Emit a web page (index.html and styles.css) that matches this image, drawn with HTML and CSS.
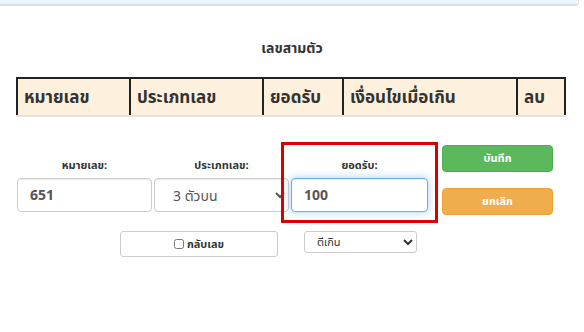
FILE: index.html
```html
<!DOCTYPE html>
<html lang="th">
<head>
  <meta charset="UTF-8" />
  <title>เลขสามตัว</title>
  <link rel="stylesheet" href="styles.css">
</head>
<body>

  <!-- ขอบล่างของแผงด้านบน -->
  <div class="top-panel"></div>

  <div class="content">
    <h3 class="title">เลขสามตัว</h3>

    <table class="bet-table">
      <thead>
        <tr>
          <th class="col-number">หมายเลข</th>
          <th class="col-type">ประเภทเลข</th>
          <th class="col-amount">ยอดรับ</th>
          <th class="col-cond">เงื่อนไขเมื่อเกิน</th>
          <th class="col-del">ลบ</th>
        </tr>
      </thead>
    </table>

    <!-- ฟอร์มเพิ่มเลข -->
    <div class="form-row">
      <div class="field">
        <label>หมายเลข:</label>
        <input type="text" class="form-control bold" value="651" />
      </div>
      <div class="field">
        <label>ประเภทเลข:</label>
        <select class="form-control">
          <option>3 ตัวบน</option>
          <option>3 ตัวโต๊ด</option>
        </select>
      </div>
      <div class="field highlight">
        <label>ยอดรับ:</label>
        <input type="text" class="form-control bold focused" value="100" id="amountInput" />
      </div>
      <div class="actions">
        <button class="btn btn-save">บันทึก</button>
        <button class="btn btn-cancel">ยกเลิก</button>
      </div>
    </div>

    <div class="option-row">
      <label class="reverse-box"><input type="checkbox" /> กลับเลข</label>
      <select class="small-select">
        <option>ตีเกิน</option>
        <option>ไม่รับ</option>
      </select>
    </div>
  </div>

  <script>
    const amount = document.getElementById('amountInput');
    amount.focus();
    amount.setSelectionRange(3, 3);
  </script>

</body>
</html>
```

FILE: styles.css
```css
body {
  margin: 0;
  font-family: Tahoma, "Noto Sans Thai", "Noto Sans", "DejaVu Sans", sans-serif;
  color: #333;
  background: #fff;
}

.top-panel {
  height: 4px;
  margin-right: 5px;
  background: #eef6fd;
  border-bottom: 2px solid #d9dfe3;
  border-right: 1px solid #d9dfe3;
  border-bottom-right-radius: 4px;
}

.content {
  padding: 0 16px;
}

.title {
  margin: 34px 0 19px;
  text-align: center;
  font-size: 14px;
  font-weight: bold;
  line-height: 18px;
}

.bet-table {
  width: 550px;
  border-collapse: collapse;
  background: #fdf0dc;
}

.bet-table th {
  height: 35px;
  padding: 1px 6px 0;
  text-align: left;
  font-size: 17px;
  font-weight: bold;
  color: #333;
  border-top: 2px solid #222;
  border-left: 2px solid #222;
  border-right: 2px solid #222;
  border-bottom: 2px solid #e3e3e3;
}

.col-number { width: 99px; }
.col-type { width: 119px; }
.col-amount { width: 66px; }
.col-cond { width: 160px; }

.form-row {
  display: flex;
  align-items: flex-start;
  margin-top: 28px;
  padding-left: 1px;
}

.field {
  display: flex;
  flex-direction: column;
  align-items: center;
  width: 135px;
  margin-right: 2px;
  padding-top: 13px;
}

.field label {
  font-size: 11px;
  font-weight: bold;
  line-height: 16px;
  margin-bottom: 4px;
}

.form-control {
  box-sizing: border-box;
  width: 100%;
  height: 34px;
  padding: 6px 12px;
  font-family: inherit;
  font-size: 14px;
  color: #555;
  background: #fff;
  border: 1px solid #ccc;
  border-radius: 4px;
  box-shadow: inset 0 1px 1px rgba(0, 0, 0, 0.075);
}

select.form-control {
  padding-left: 14px;
}

.bold {
  font-weight: bold;
}

.focused,
.form-control:focus {
  outline: none;
  border-color: #66afe9;
  box-shadow: inset 0 1px 1px rgba(0, 0, 0, 0.075), 0 0 8px rgba(102, 175, 233, 0.6);
}

.highlight {
  position: relative;
  width: 137px;
}

.highlight::after {
  content: "";
  position: absolute;
  top: -3px;
  left: -10px;
  right: -10px;
  bottom: -11px;
  border: 3px solid #d90000;
  pointer-events: none;
}

.actions {
  display: flex;
  flex-direction: column;
  gap: 16px;
  margin-left: 12px;
}

.btn {
  width: 111px;
  height: 27px;
  font-family: inherit;
  font-size: 11px;
  font-weight: bold;
  color: #fff;
  border: 1px solid transparent;
  border-radius: 4px;
}

.btn-save {
  background: #5cb85c;
  border-color: #4cae4c;
}

.btn-cancel {
  background: #f0ad4e;
  border-color: #eea236;
}

.option-row {
  display: flex;
  align-items: flex-start;
  gap: 26px;
  margin-top: 16px;
  padding-left: 104px;
}

.reverse-box {
  box-sizing: border-box;
  display: flex;
  align-items: center;
  justify-content: center;
  gap: 3px;
  width: 158px;
  height: 26px;
  font-size: 11px;
  font-weight: bold;
  border: 1px solid #ccc;
  border-radius: 3px;
}

.reverse-box input {
  margin: 0;
  width: 10px;
  height: 10px;
}

.small-select {
  box-sizing: border-box;
  width: 113px;
  height: 22px;
  padding: 0 8px;
  font-family: inherit;
  font-size: 11px;
  color: #333;
  background: #fff;
  border: 1px solid #ccc;
  border-radius: 3px;
}
```
